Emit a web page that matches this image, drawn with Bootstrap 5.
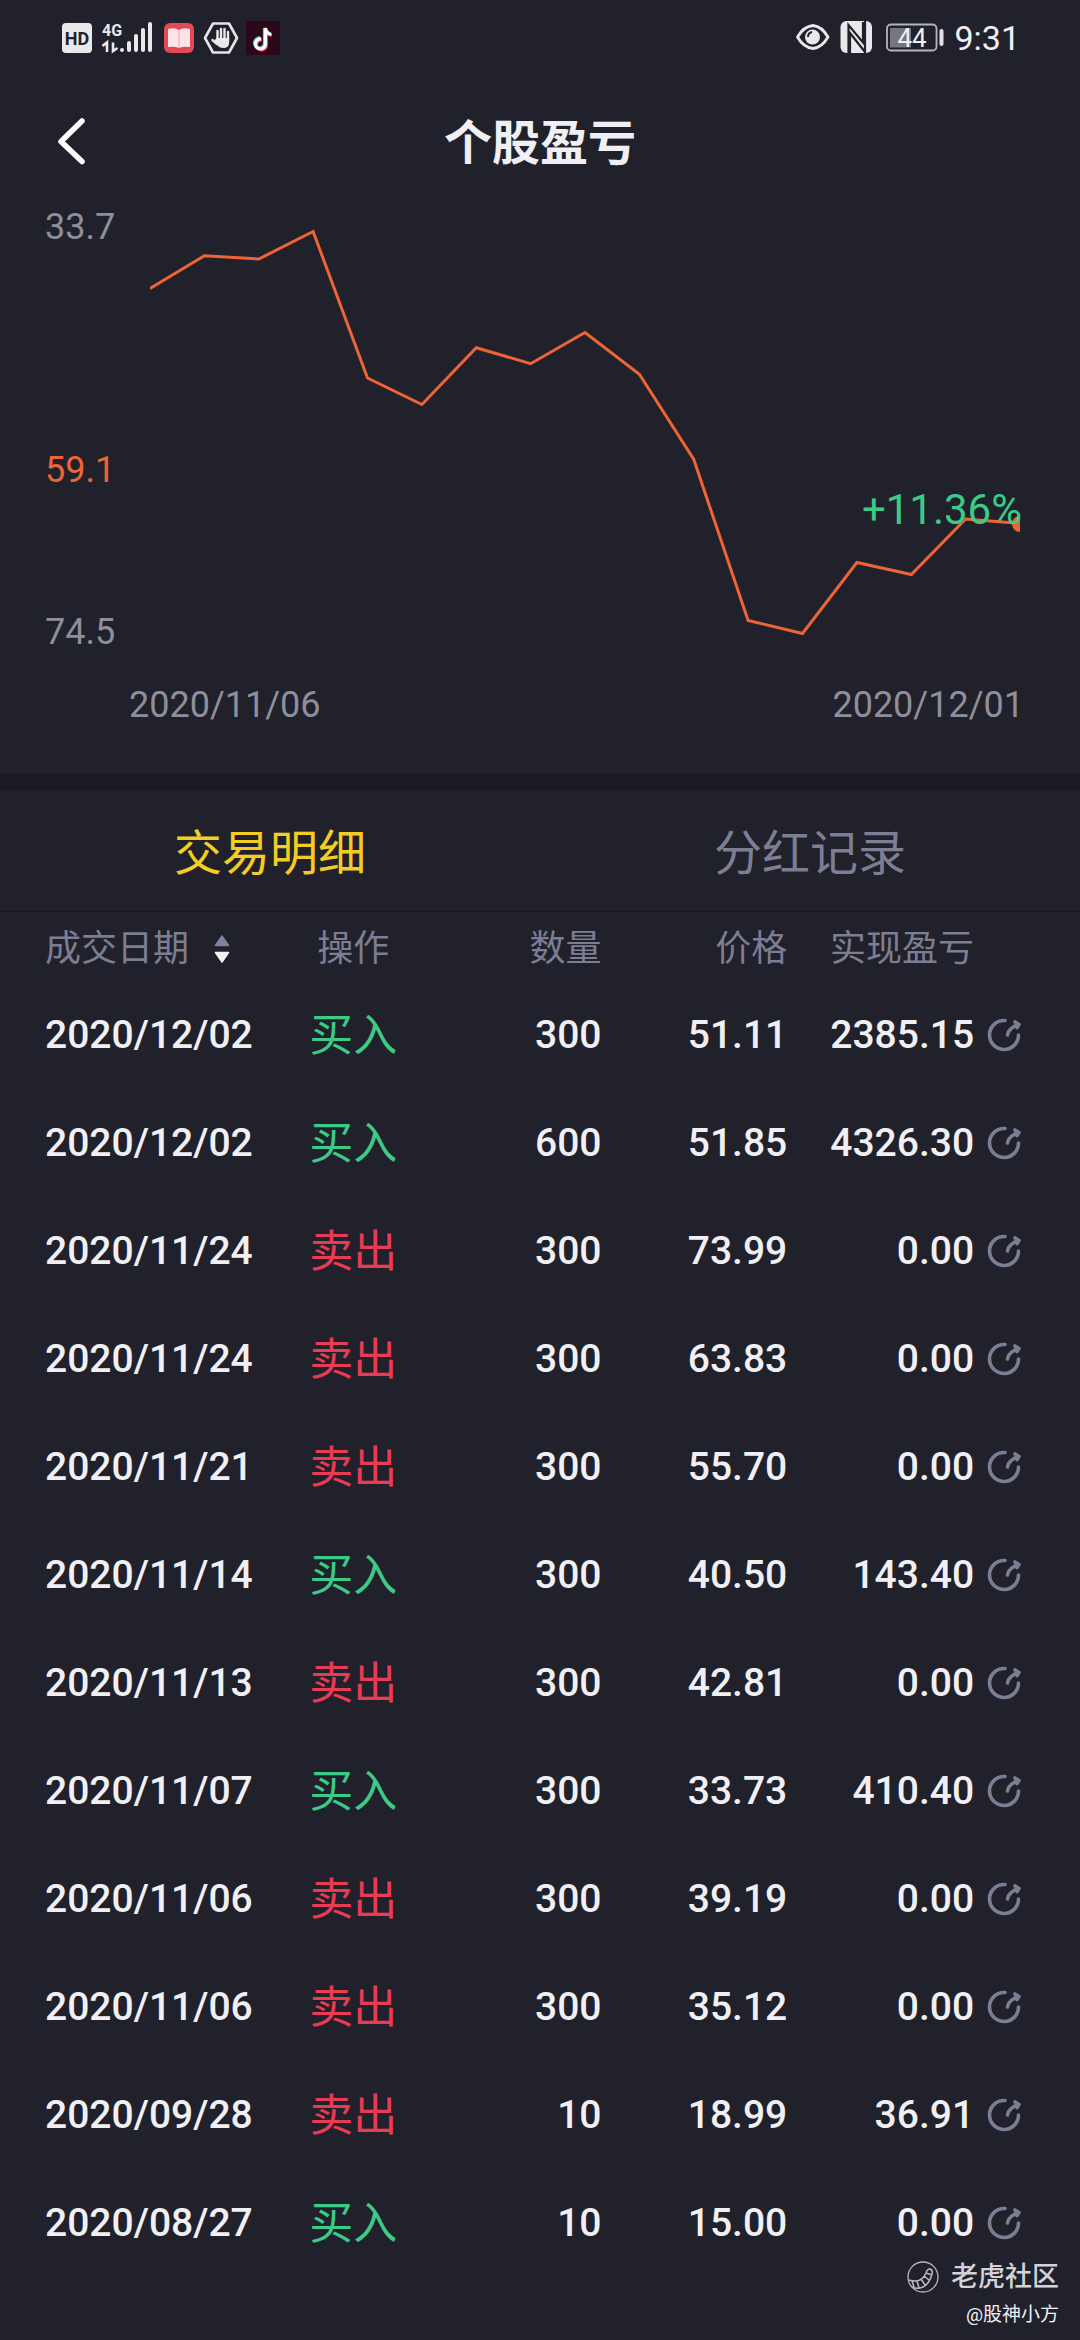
<!DOCTYPE html>
<html lang="zh-CN">
<head>
<meta charset="utf-8">
<meta name="viewport" content="width=device-width, initial-scale=1">
<title>个股盈亏</title>
<link href="https://cdn.jsdelivr.net/npm/bootstrap@5.3.0/dist/css/bootstrap.min.css" rel="stylesheet">
<style>
:root{--ink:#f0f0f4;--muted:#7d7d94;--axis:#8f8f9b;--up:#3ccb86;--down:#ea3b54;--line:#ee6436;--bg:#21212b;--band:#1b1b24}
body{background:var(--bg);color:var(--ink);font-family:Roboto,"Noto Sans CJK SC",sans-serif;min-height:100vh}
svg{display:block;flex:none}
.status-bar{height:76px;padding:0 60px}
.status-clock{font-size:34px;line-height:40px}
.title-bar{height:130px;padding-top:6px}
.title-bar h1{font-size:48px;line-height:64px;font-weight:700}
.back-btn{left:41px;top:36px;width:60px;height:60px}
.chart-area{height:446px;padding:1px 60px 0 45px}
.axis-labels{width:105px;font-size:36px;line-height:40px;color:var(--axis)}
.gap-top{flex-grow:5}.gap-bottom{flex-grow:3}
.now-value{color:var(--line)}
.change-label{right:-2px;top:279px;font-size:42px;line-height:48px;color:var(--up)}
.date-axis{padding:33px 56px 48px 129px;font-size:36px;line-height:40px;color:var(--axis)}
.section-band{height:18px;background:var(--band)}
.trade-tabs{border-bottom:1px solid #181820}
.trade-tabs .nav-link{height:120px;padding:6px 0 0;font-size:48px;line-height:64px;color:var(--muted);border-radius:0}
.trade-tabs .nav-link.active{color:#f3cc24}
.trades{table-layout:fixed;--bs-table-bg:transparent;--bs-table-color:var(--ink)}
.trades th,.trades td{padding:0;border:0;vertical-align:middle;white-space:nowrap}
.trades th{height:69px;padding-top:4px;font-size:36px;line-height:48px;font-weight:400;color:var(--muted)}
.trades td{height:108px;font-size:39px;line-height:48px;font-weight:500}
.trades th:first-child,.trades td:first-child{padding-left:45px}
.trades td.side{padding-top:2px;font-size:44px;font-weight:400}
.trades td.buy{color:var(--up)}
.trades td.sell{color:var(--down)}
.sort-btn{color:inherit;gap:25px;font-size:inherit;line-height:inherit}
.share-btn{color:var(--muted);margin-left:12px}
.author-mark{right:21px;bottom:6px;text-align:right}
.author-mark .site{font-size:27px;line-height:38px;font-weight:500;color:#d2d2d8;gap:12px}
.author-mark .user{font-size:19px;line-height:38px}
</style>
</head>
<body class="position-relative">
<header>
  <div class="status-bar d-flex align-items-center justify-content-between">
    <div class="d-flex align-items-center" aria-label="HD 4G">
      <svg width="222" height="36" viewBox="60 20 222 36">
        <rect x="62" y="23" width="30" height="30" rx="4" fill="#e9e9ec"/>
        <text x="77" y="45" text-anchor="middle" font-size="18" font-weight="700" fill="#21212b">HD</text>
        <text x="102" y="36" font-size="16" font-weight="700" fill="#e9e9ec">4G</text>
        <g stroke="#e9e9ec" fill="none" stroke-width="2.6"><path d="M102.500 46l4.500-3.500V52M113 42.500V51l4.500-3"/></g>
        <g stroke="#e9e9ec" stroke-width="4" stroke-linecap="round"><path d="M122 50v.100M129 43v7M136 36v14M143 30v20M150 24v26"/></g>
        <rect x="164" y="23" width="30" height="30" rx="6" fill="#e54a54"/>
        <path d="M168 29q7-2 11 1 4-3 11-1v18q-7-1-11 1-4-2-11-1z" fill="#fde3ea"/><path d="M179 30v18" stroke="#f0a3b0"/>
        <path d="M213 23.500h16l8 14.500-8 14.500h-16L205 38z" fill="none" stroke="#e4e4e9" stroke-width="2.600" stroke-linejoin="round"/>
        <path d="M217.500 40V31M221 40V29M224.500 40V29M228 40V32M217 44l-4.500-4" stroke="#e9e9ec" stroke-width="2.400" stroke-linecap="round"/><path d="M216.300 38h12.900v4q0 6-6 6-4 0-6-3l-3-4z" fill="#e9e9ec"/>
        <rect x="246" y="21" width="34" height="34" rx="1" fill="#2b0818"/>
        <g fill="none" stroke-width="3.200"><path d="M260 38a5 5 0 1 0 4.500 5V28q1 5 6 5.500" stroke="#55d6dc"/><path d="M262 40a5 5 0 1 0 4.500 5V30q1 5 5 5.500" stroke="#e8375e"/><path d="M261 39a5 5 0 1 0 4.500 5V28q1 6 6 6.500" stroke="#fff"/></g>
      </svg>
    </div>
    <div class="d-flex align-items-center">
      <svg width="159" height="36" viewBox="795 20 159 36">
        <path d="M797.500 37q6-10.500 15.500-11.500 9 1 15 11.500-6 10.500-15 11.500-9.500-1-15.500-11.500z" fill="none" stroke="#e9e9ec" stroke-width="2.800" stroke-linejoin="round"/>
        <circle cx="812.500" cy="37" r="7.500" fill="#e9e9ec"/><path d="M808 37q0-4 4-5" stroke="#21212b" stroke-width="2" fill="none"/>
        <rect x="840.500" y="21" width="31.500" height="32" rx="6" fill="#e9e9ec"/>
        <path d="M848.500 53V25l14.500 17.500V22M850 53V33l15 19V21" fill="none" stroke="#21212b" stroke-width="2.200"/>
        <rect x="887" y="24.500" width="49.500" height="26" rx="4" fill="none" stroke="#b5b5bd" stroke-width="1.800"/>
        <rect x="890" y="28" width="21" height="19.500" fill="#76767e"/>
        <path d="M941.500 31v13" stroke="#e0e0e5" stroke-width="4" stroke-linecap="round"/>
        <text x="912" y="47" text-anchor="middle" font-size="26" fill="#f0f0f4">44</text>
      </svg>
      <span class="status-clock">9:31</span>
    </div>
  </div>
  <div class="title-bar position-relative d-flex align-items-center justify-content-center">
    <button class="back-btn btn p-0 border-0 position-absolute" type="button" aria-label="返回">
      <svg width="60" height="60" viewBox="0 0 60 60"><path d="M41 9L20 29.500 41 49.500" fill="none" stroke="#fff" stroke-width="5.500" stroke-linecap="round" stroke-linejoin="round"/></svg>
    </button>
    <h1 class="m-0">个股盈亏</h1>
  </div>
</header>
<main>
  <section>
    <div class="chart-area d-flex">
      <div class="axis-labels d-flex flex-column flex-shrink-0">
        <span>33.7</span><span class="gap-top"></span><span class="now-value">59.1</span><span class="gap-bottom"></span><span>74.5</span>
      </div>
      <div class="position-relative flex-grow-1">
        <svg width="100%" height="100%" viewBox="0 1 870 445" preserveAspectRatio="none">
          <polyline fill="none" stroke="#ee6436" stroke-width="3" points="0,82.500 54.400,49.700 108.800,53 163.100,25.500 217.500,172 271.900,198.500 326.300,141.700 380.600,157.700 435,126.500 489.400,168.300 543.800,253.500 598.100,414.500 652.500,427.500 706.900,356.500 761.300,368.500 815.600,313 870,317.500"/>
          <circle cx="870" cy="318" r="8" fill="#ee6436"/>
        </svg>
        <span class="change-label position-absolute">+11.36%</span>
      </div>
    </div>
    <div class="date-axis d-flex justify-content-between"><span>2020/11/06</span><span>2020/12/01</span></div>
  </section>
  <div class="section-band"></div>
  <nav class="trade-tabs nav nav-justified">
    <a class="nav-link active d-flex align-items-center justify-content-center" href="#trades" aria-current="page">交易明细</a>
    <a class="nav-link d-flex align-items-center justify-content-center" href="#dividends">分红记录</a>
  </nav>
  <table class="trades table mb-0" id="trades">
    <colgroup><col style="width:24.4%"><col style="width:16.6%"><col style="width:14.7%"><col style="width:17.2%"><col style="width:17.3%"><col></colgroup>
    <thead>
      <tr>
        <th scope="col"><button class="sort-btn btn p-0 border-0 d-flex align-items-center" type="button">成交日期
          <svg width="16" height="28" viewBox="0 0 16 28"><path d="M8 1l6.500 9.500h-13z" fill="#7f829e" stroke="#7f829e" stroke-width="1.500" stroke-linejoin="round"/><path d="M8 27l6.500-9.500h-13z" fill="#f2f2f5" stroke="#f2f2f5" stroke-width="1.500" stroke-linejoin="round"/></svg></button></th>
        <th scope="col" class="text-center">操作</th>
        <th scope="col" class="text-end">数量</th>
        <th scope="col" class="text-end">价格</th>
        <th scope="col" class="text-end">实现盈亏</th>
        <th></th>
      </tr>
    </thead>
    <tbody></tbody>
  </table>
</main>
<footer class="author-mark position-absolute">
  <div class="site d-flex align-items-center justify-content-end">
    <svg width="32" height="32" viewBox="0 0 32 32" fill="none" stroke="#b9b9c1" stroke-width="1.300"><circle cx="16" cy="16" r="15"/><path d="M2 19q12 4 17-7 1-4 4-4 3 1 2 5-3 12-12 14-4 1-8-1M5 20l2 6M10 20l2 7M14 18l4 6M17 15l5 4M19 12l6 2" stroke-width="1.500"/></svg>
    <span>老虎社区</span>
  </div>
  <div class="user">@股神小方</div>
</footer>
<script src="https://cdn.jsdelivr.net/npm/bootstrap@5.3.0/dist/js/bootstrap.bundle.min.js"></script>
<script>
const trades = [
  ["2020/12/02","买入","300","51.11","2385.15"],
  ["2020/12/02","买入","600","51.85","4326.30"],
  ["2020/11/24","卖出","300","73.99","0.00"],
  ["2020/11/24","卖出","300","63.83","0.00"],
  ["2020/11/21","卖出","300","55.70","0.00"],
  ["2020/11/14","买入","300","40.50","143.40"],
  ["2020/11/13","卖出","300","42.81","0.00"],
  ["2020/11/07","买入","300","33.73","410.40"],
  ["2020/11/06","卖出","300","39.19","0.00"],
  ["2020/11/06","卖出","300","35.12","0.00"],
  ["2020/09/28","卖出","10","18.99","36.91"],
  ["2020/08/27","买入","10","15.00","0.00"]
];
document.querySelector(".trades tbody").innerHTML = trades.map(([date, side, qty, price, gain]) => `
  <tr>
    <td>${date}</td>
    <td class="side text-center ${side === "买入" ? "buy" : "sell"}">${side}</td>
    <td class="text-end">${qty}</td>
    <td class="text-end">${price}</td>
    <td class="text-end">${gain}</td>
    <td><button class="share-btn btn p-0 border-0 d-block" type="button" aria-label="分享">
      <svg width="36" height="36" viewBox="0 0 36 36" fill="none" stroke="currentColor" stroke-width="3.600" stroke-linecap="round" stroke-linejoin="round"><path d="M19 3.500A14.500 14.500 0 1 0 32.500 18"/><path d="M21.500 18Q22 12 32 7.500"/><path d="M29 5l4 2.500-2 3"/></svg>
    </button></td>
  </tr>`).join("");
</script>
</body>
</html>
